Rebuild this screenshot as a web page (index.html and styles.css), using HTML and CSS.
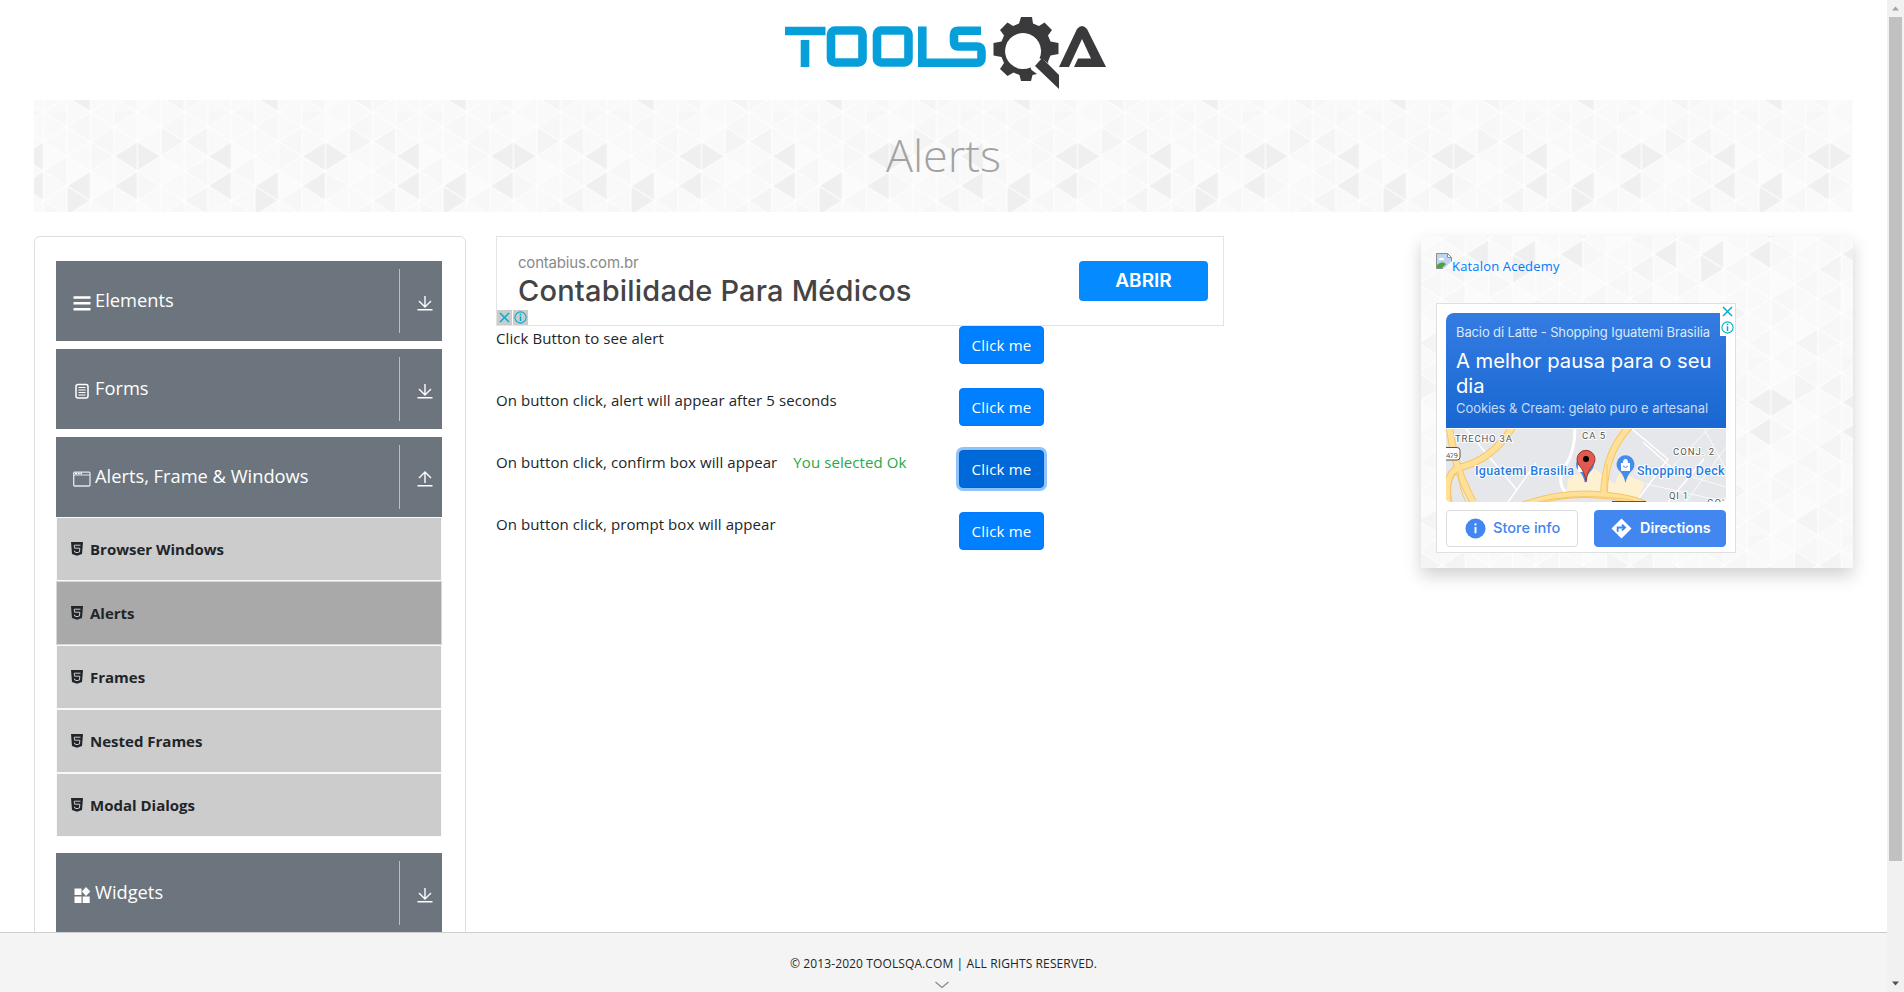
FILE: index.html
```html
<!DOCTYPE html>
<html lang="en">
<head>
<meta charset="utf-8">
<title>ToolsQA - Alerts</title>
<link rel="stylesheet" href="styles.css">
</head>
<body>
<svg class="defs" width="0" height="0" aria-hidden="true">
  <defs>
    <g id="tile">
      <rect width="188" height="177.6" fill="#f9f9f9"/>
      <g fill="#f7f7f7">
        <path d="M0 0L23.5-14.8V14.8zM23.5 14.8L47 0V29.6zM70.5-14.8L94 0 70.5 14.8zM117.5 14.8L141 0V29.6zM164.5-14.8V14.8L188 0zM0 59.2L23.5 44.4V74zM47 29.6L70.5 14.8V44.4zM47 29.6V59.2L70.5 44.4zM94 59.2V88.8L117.5 74zM47 88.8L70.5 74V103.6zM141 59.2L164.5 44.4V74zM0 88.8L23.5 103.6 0 118.4zM117.5 103.6L141 88.8V118.4zM141 118.4L164.5 103.6V133.2zM94 118.4L117.5 103.6V133.2zM23.5 133.2L47 118.4V148zM47 118.4V148L70.5 133.2zM94 118.4V148L117.5 133.2zM141 148L164.5 133.2V162.8zM141 148V177.6L164.5 162.8zM0 148L23.5 133.2V162.8zM70.5 162.8L94 148V177.6z"/>
      </g>
      <g fill="#fbfbfb">
        <path d="M94 0V29.6L117.5 14.8zM0 29.6V59.2L23.5 44.4zM23.5 44.4V74L47 59.2zM117.5 44.4V74L141 59.2zM47 59.2V88.8L70.5 74zM94 88.8V118.4L117.5 103.6zM164.5 103.6V133.2L188 118.4zM23.5 103.6V133.2L47 118.4zM94 148V177.6L117.5 162.8zM117.5 133.2V162.8L141 148z"/>
      </g>
      <g fill="#f4f4f4">
        <path d="M117.5 14.8V44.4L141 29.6zM141 29.6L164.5 14.8V44.4zM141 88.8L164.5 74V103.6zM47 118.4V148L70.5 133.2zM117.5 162.8L141 148V177.6z"/>
      </g>
      <g fill="#efefef">
        <path d="M70.5 44.4L94 29.6V59.2zM94 29.6V59.2L117.5 44.4zM164.5 44.4L188 29.6V59.2zM164.5 74L188 59.2V88.8zM23.5 74L47 59.2V88.8zM23.5 74V103.6L47 88.8zM70.5 74L94 59.2V88.8zM23.5 162.8L47 148V177.6z"/>
      </g>
      <path fill="none" stroke="#fefefe" stroke-width="1.2" d="M0 0V178M23.5 0V178M47 0V178M70.5 0V178M94 0V178M117.5 0V178M141 0V178M164.5 0V178M188 0V178M0 0L188 118.4M0 29.6L188 148M0 59.2L188 177.6M0 88.8L141 177.6M0 118.4L94 177.6M0 148L47 177.6M47 0L188 88.8M94 0L188 59.2M141 0L188 29.6M188 0L0 118.4M188 29.6L0 148M188 59.2L0 177.6M188 88.8L47 177.6M188 118.4L94 177.6M188 148L141 177.6M141 0L0 88.8M94 0L0 59.2M47 0L0 29.6"/>
    </g>
    <pattern id="bannerPattern" width="188" height="177.6" patternUnits="userSpaceOnUse" patternTransform="translate(9.4 11.9)"><use href="#tile"/></pattern>
    <pattern id="promoPattern" width="188" height="177.6" patternUnits="userSpaceOnUse" patternTransform="translate(67.8 121.9)"><use href="#tile"/></pattern>
    <symbol id="down" viewBox="0 0 16 16"><path d="M8 1v10M2 6l6 6 6-6M.5 14.8h15" fill="none" stroke="currentColor" stroke-width="1.4"/></symbol>
    <symbol id="up" viewBox="0 0 16 16"><path d="M8 12V1.5M2 7l6-6 6 6M.5 14.8h15" fill="none" stroke="currentColor" stroke-width="1.4"/></symbol>
    <symbol id="html5" viewBox="0 0 12 14"><path fill="currentColor" d="M0 0h12l-1 12L6 13.800 1 12z"/><path d="M9.500 3.200H3.200L3.500 6.200h5.300L8.500 9.900 6 10.700 3.600 9.900V8.600" fill="none" stroke="#ccc" stroke-width="1"/></symbol>
    <symbol id="close" viewBox="0 0 15 15"><path d="M3 3l9 9M12 3l-9 9" stroke="#00aecd" stroke-width="1.500" fill="none"/></symbol>
    <symbol id="info" viewBox="0 0 15 15"><circle cx="7.500" cy="7.500" r="5.600" fill="none" stroke="#00aecd" stroke-width="1.100"/><path d="M7.500 6.300v4.700M7.500 3.800v1.500" stroke="#00aecd" stroke-width="1.500"/></symbol>
  </defs>
</svg>
<div class="viewport">
  <div class="page">
    <header class="header">
      <svg class="logo" viewBox="0 0 350 100" role="img" aria-label="ToolsQA">
        <g fill="none" stroke="#069fda" stroke-width="8.600">
          <path d="M15 31H55.500M35 40V67"/>
          <rect x="61" y="30.500" width="31.500" height="32" rx="4"/>
          <rect x="107" y="30.500" width="31.500" height="32" rx="4"/>
          <path d="M152.300 26.500V62.700H207Q211.500 62.700 211.500 58V51Q211.500 46.500 207 46.500H188Q184 46.500 184 42V35Q184 30.700 188 30.700H211"/>
        </g>
        <g fill="#3a393b">
          <path fill-rule="evenodd" d="M251 17h11l1 6.500 6 2.500 5.500-3.500 7.500 7.500-4 5.500 2.500 6 8 1.500v11l-8 1.500-2.500 6 .5 2-6-4.500-3-.5a18 18 0 1 0-9 9l1 2.500 5.500 4-4.500 1-1.500 6h-10l-1.500-6-6-2.500-6 3.500-7.500-7 4-6-2.500-6-8-1.500V43l8-1.500 2.500-6-4-5.500 7.500-7.500 5.500 3.500 6-2.500z"/>
          <path d="M272 58L289 75V89L265 66z"/>
          <path fill-rule="evenodd" d="M289 67L307 29Q312 23 317 29L336 67H304L308 58.500H321L312 39 299 67z"/>
        </g>
      </svg>
    </header>
    <section class="banner">
      <svg class="texture"><rect width="100%" height="100%" fill="url(#bannerPattern)"/></svg>
      <h1 class="banner-title">Alerts</h1>
    </section>
    <div class="columns">
      <aside class="sidebar">
        <div class="group">
          <svg class="group-icon" viewBox="0 0 18 18"><path d="M.5 3.500h17M.5 9.300h17M.5 15.200h17" stroke="#fff" stroke-width="2.600"/></svg>
          <span class="group-name">Elements</span>
          <span class="toggle"><svg><use href="#down"/></svg></span>
        </div>
        <div class="group">
          <svg class="group-icon" viewBox="0 0 18 18"><rect x="3" y="2.500" width="12" height="13.500" rx="2" fill="none" stroke="#fff" stroke-width="1.500"/><path d="M5.500 5.500h7M5.500 8h7M5.500 10.500h7M5.500 13h7" stroke="#fff" stroke-width="1.100"/></svg>
          <span class="group-name">Forms</span>
          <span class="toggle"><svg><use href="#down"/></svg></span>
        </div>
        <div class="group open">
          <svg class="group-icon" viewBox="0 0 18 18"><rect x=".7" y="2.200" width="16.300" height="13.800" rx="1" fill="none" stroke="#e3e5e7" stroke-width="1.300"/><path d="M1 5h16" stroke="#e3e5e7"/><path d="M2 3.500h7" stroke="#fff" stroke-width="1.500" stroke-dasharray="2 .7"/></svg>
          <span class="group-name">Alerts, Frame &amp; Windows</span>
          <span class="toggle"><svg><use href="#up"/></svg></span>
        </div>
        <ul class="menu">
          <li><svg><use href="#html5"/></svg><span>Browser Windows</span></li>
          <li class="active"><svg><use href="#html5"/></svg><span>Alerts</span></li>
          <li><svg><use href="#html5"/></svg><span>Frames</span></li>
          <li><svg><use href="#html5"/></svg><span>Nested Frames</span></li>
          <li><svg><use href="#html5"/></svg><span>Modal Dialogs</span></li>
        </ul>
        <div class="group">
          <svg class="group-icon" viewBox="0 0 18 18"><path fill="#fff" d="M1.500 2.500h7v6.500h-7zM1.500 10.500h7v6.500h-7zM9.700 10.500h7v6.500h-7zM13 1l4.300 4.500L13 10 8.900 5.500z"/></svg>
          <span class="group-name">Widgets</span>
          <span class="toggle"><svg><use href="#down"/></svg></span>
        </div>
      </aside>
      <main class="main">
        <div class="ad-strip">
          <div class="ad-copy"><span class="ad-domain">contabius.com.br</span><span class="ad-title">Contabilidade Para Médicos</span></div>
          <span class="ad-cta">ABRIR</span>
          <div class="ad-marks"><svg><use href="#close"/></svg><svg><use href="#info"/></svg></div>
        </div>
        <div class="row"><div class="label">Click Button to see alert</div><button class="btn">Click me</button></div>
        <div class="row"><div class="label">On button click, alert will appear after 5 seconds</div><button class="btn">Click me</button></div>
        <div class="row"><div class="label"><span>On button click, confirm box will appear</span><span class="result">You selected Ok</span></div><button class="btn focused">Click me</button></div>
        <div class="row"><div class="label">On button click, prompt box will appear</div><button class="btn">Click me</button></div>
      </main>
      <aside class="promo">
        <svg class="texture"><rect width="100%" height="100%" fill="url(#promoPattern)"/></svg>
        <a class="broken"><svg viewBox="0 0 16 16"><path d="M.5.500h11l4 4v11H.5z" fill="#fff"/><path d="M1 1h10v4h4v4L9 15H1z" fill="#bfd3f2"/><path d="M3 6q1-2 2.500-1Q8 4 8 7H3z" fill="#fff"/><path d="M1 15v-3q5-5 9-1l-4 4z" fill="#4aa63c"/><path d="M.5 15.500V.500h11l4 4V9M11.500.500v4h4M.500 15.500H7" fill="none" stroke="#8d8d8d"/><path d="M16 8l-8 8h8z" fill="#fff"/></svg><span>Katalon Acedemy</span></a>
        <div class="card">
          <div class="card-top">
            <div class="card-place">Bacio di Latte - Shopping Iguatemi Brasilia</div>
            <div class="card-title">A melhor pausa para o seu<br>dia</div>
            <div class="card-sub">Cookies &amp; Cream: gelato puro e artesanal</div>
          </div>
          <svg class="map" viewBox="0 0 280 73">
            <rect width="280" height="73" fill="#e6e7eb"/>
            <g fill="none" stroke="#fff"><path d="M186 0L222 30 190 73M197 13L227 40M222 73L258 30M62 73L90 34M20 0L70 60" stroke-width="1.500"/><path d="M262 0L215 50M280 40L258 0M240 73L280 18M200 55L280 73M226 42L280 58" stroke-width=".8"/><path d="M129 0Q129 22 119 38T122 66" stroke-width="3"/></g>
            <path d="M122 50l24-12 25 19-3 12h-48zM174 43l25 11-8 17h-30z" fill="#fdf1d2"/>
            <g fill="none" stroke="#f6c666" stroke-width="7.500"><path d="M67-3Q47 31 12 39M3-3L8 25Q14 49 27 73M2 73Q-2 50 10 40M75 77Q115 62 155 66T200 77M184-3Q159 23 158 64"/></g>
            <g fill="none" stroke="#ffe098" stroke-width="5.500"><path d="M67-3Q47 31 12 39M3-3L8 25Q14 49 27 73M2 73Q-2 50 10 40M75 77Q115 62 155 66T200 77M184-3Q159 23 158 64"/></g>
            <path d="M92 73Q120 66 155 68T188 73M161 35V62M9 44Q2 55 6 73M12 42Q13 60 20 73" fill="none" stroke="#f6c666"/>
            <rect x="-8" y="18.500" width="22" height="12.500" rx="3" fill="#fff" stroke="#555"/>
            <g class="map-text"><text x="0" y="28.500" textLength="12" font-size="8">479</text><text x="9" y="13" textLength="57">TRECHO 3A</text><text x="136" y="10" textLength="23">CA 5</text><text x="227" y="26" textLength="41">CONJ. 2</text><text x="223" y="70" textLength="19">QI 1</text><text x="261" y="77" textLength="17">CO'</text></g>
            <path d="M139 54q-2-9-7-13a9 9 0 1 1 14 0q-5 4-7 13zM179.500 54q-2-9-7-13a9 9 0 1 1 14 0q-5 4-7 13z" fill="#468de9"/>
            <path d="M175 34h9v8h-9zM177 34q0-4 2.500-4t2.500 4M132 36h5v7h-5z" fill="#fff"/><path d="M177 37q2.500 3 5 0" stroke="#468de9" fill="none"/>
            <path d="M140 53q-1-10-7-17a9 9 0 1 1 14 0q-6 6-7 17z" fill="#e05a50" stroke="#9e352f"/><circle cx="140" cy="30" r="3" fill="#000"/>
            <g class="map-blue"><text x="29" y="46" textLength="99">Iguatemi Brasilia</text><text x="191" y="46" textLength="87.500">Shopping Deck</text></g>
            <path d="M166 72.500h34" stroke="#555"/>
          </svg>
          <div class="card-actions">
            <span class="action info"><svg viewBox="0 0 22 22"><circle cx="11" cy="11" r="10.500" fill="#4286ef"/><path d="M11 9.500v6.500M11 5.500v2.300" stroke="#fff" stroke-width="2"/></svg><span>Store info</span></span>
            <span class="action go"><svg viewBox="0 0 22 22"><path d="M11 .5L21.500 11 11 21.500.5 11z" fill="#fff"/><path d="M7 14.500V10h7M11.500 7l3.200 3-3.200 3" fill="none" stroke="#4286ef" stroke-width="2"/></svg><span>Directions</span></span>
          </div>
          <div class="card-marks"><svg><use href="#close"/></svg><svg><use href="#info"/></svg></div>
        </div>
      </aside>
    </div>
    <footer class="footer"><span>© 2013-2020 TOOLSQA.COM | ALL RIGHTS RESERVED.</span>
      <svg class="chevron" viewBox="0 0 14 8"><path d="M.500 1l6.500 5.500L13.500 1" fill="none" stroke="#888" stroke-width="1.200"/></svg></footer>
  </div>
  <div class="scrollbar"><svg viewBox="0 0 17 17"><path d="M5 10.500l3.500-4 3.500 4z" fill="#a3a3a3"/></svg><div class="thumb"></div><svg viewBox="0 0 17 17"><path d="M5 6.500l3.500 4 3.500-4z" fill="#505050"/></svg></div>
</div>
</body>
</html>
```
FILE: styles.css
```css
* { box-sizing: border-box; }
body { margin: 0; overflow: hidden; background: #fff; color: #212529; font: 16px/24px "Open Sans", "Noto Sans", sans-serif; }
svg { display: block; flex: none; }
.defs { position: absolute; }
.viewport { display: flex; height: 992px; overflow: hidden; }
.page { position: relative; flex: 1; height: 992px; overflow: hidden; padding: 0 34px; }
.header { height: 100px; display: flex; justify-content: center; padding-left: 3px; }
.logo { width: 350px; height: 100px; }
.banner { position: relative; height: 112px; width: 1819px; display: flex; align-items: center; justify-content: center; }
.texture { position: absolute; inset: 0; width: 100%; height: 100%; }
.banner-title { position: relative; margin: 0 0 3px; font-size: 45px; line-height: 56px; font-weight: 300; color: #a3a3a3; letter-spacing: -.1px; }
.columns { display: flex; align-items: flex-start; width: 1819px; margin-top: 24px; }
.sidebar { width: 432px; height: 900px; padding: 24px 23px 0 21px; border: 1px solid #dfdfdf; border-radius: 6px; }
.group { display: flex; align-items: center; width: 386px; height: 80px; margin-bottom: 8px; padding-left: 17px; background: #6c757d; color: #fff; font-size: 18.300px; }
.group.open { margin-bottom: 0; }
.group-icon { width: 18px; height: 18px; margin-top: 3px; }
.group-name { margin-left: 4px; padding-bottom: 2px; flex: 1; }
.toggle { display: flex; align-items: center; justify-content: center; width: 43px; height: 64px; padding: 4px 0 0 7px; border-left: 1px solid #babec2; }
.toggle svg { width: 16px; height: 16px; }
.menu { list-style: none; margin: 0 0 16px; padding: 0; width: 386px; }
.menu li { display: flex; align-items: center; height: 64px; padding-left: 14px; border: 1px solid #f8f9fa; background: #ccc; font-weight: 700; font-size: 15px; }
.menu li.active { background: #a9a9a9; border-color: #d3d8df; }
.menu svg { width: 12px; height: 14px; margin-right: 7px; }
.main { width: 728px; margin-left: 30px; }
.ad-strip { position: relative; display: flex; justify-content: space-between; height: 90px; padding: 24px 15px 0 21px; border: 1px solid #e3e3e3; font-family: Inter, sans-serif; background: #fff; }
.ad-copy { display: flex; flex-direction: column; margin-top: -8px; }
.ad-domain { font-size: 15px; line-height: 19px; color: #8a8a8a; letter-spacing: -.2px; }
.ad-title { font-size: 29px; line-height: 38px; font-weight: 500; color: #444; letter-spacing: .2px; }
.ad-cta { width: 129px; height: 40px; border-radius: 4px; background: #058bff; color: #fff; font-weight: 600; font-size: 19px; line-height: 39px; text-align: center; }
.ad-marks { position: absolute; left: 0; bottom: 0; display: flex; gap: 1px; }
.ad-marks svg { width: 15px; height: 15px; background: #ccc; }
.row { display: flex; align-items: flex-start; height: 62px; }
.label { width: 463px; white-space: nowrap; font-size: 15px; letter-spacing: .08px; }
.result { margin-left: 16px; color: #28a745; }
.btn { width: 85px; height: 38px; padding: 0; border: 1px solid #007bff; border-radius: 4px; background: #007fff; color: #fff; font: 15px/24px "Open Sans", sans-serif; letter-spacing: .2px; }
.btn.focused { background: #0069d9; border-color: #0062cc; box-shadow: 0 0 0 3px #8ec3fb; }
.promo { position: relative; width: 432px; height: 332px; margin-left: auto; padding: 17px 15px 0; box-shadow: 0 8px 16px rgba(0,0,0,.18); }
.broken { position: relative; display: flex; height: 50px; color: #007bff; font-size: 13px; line-height: 27px; letter-spacing: .17px; }
.broken svg { width: 16px; height: 16px; }
.card { position: relative; width: 300px; height: 250px; padding: 9px; border: 1px solid #e0e0e0; background: #fff; font-family: Inter, sans-serif; }
.card-top { height: 115px; padding: 10px 0 0 10px; border-radius: 8px 0 0; background: linear-gradient(#347ce2, #1967d2); color: #fff; white-space: nowrap; }
.card-place { font-size: 13px; line-height: 19px; color: #dbe8fa; letter-spacing: -.12px; }
.card-title { margin-top: 6px; font-size: 20.200px; line-height: 25px; }
.card-sub { font-size: 13px; line-height: 21px; color: #c5dbf7; letter-spacing: -.06px; }
.map { width: 280px; height: 73px; margin-top: 1px; border-radius: 0 0 5px 5px; }
.map-text { font: 9.500px Roboto, sans-serif; fill: #555; stroke: #fff; stroke-width: 2px; paint-order: stroke; }
.map-blue { font: 500 12.500px Roboto, sans-serif; fill: #287bde; stroke: #fff; stroke-width: 2px; paint-order: stroke; }
.card-actions { display: flex; justify-content: space-between; margin-top: 8px; }
.action { display: flex; align-items: center; gap: 7px; width: 132px; height: 37px; padding-left: 18px; border: 1px solid #dadce0; border-radius: 4px; color: #4286ef; font-size: 14.600px; font-weight: 500; white-space: nowrap; }
.action svg { width: 21px; height: 21px; }
.action span { padding-bottom: 2px; }
.action.go { padding-left: 16px; border-color: #4286ef; background: #4286ef; color: #fff; font-size: 14.400px; font-weight: 600; gap: 8px; }
.card-marks { position: absolute; top: 0; right: 0; width: 15px; background: #fff; }
.card-marks svg { width: 15px; height: 15px; margin-bottom: 1px; }
.footer { position: absolute; left: 0; right: 0; bottom: 0; height: 60px; padding-top: 19px; border-top: 1px solid #ccc; background: #f4f4f4; text-align: center; font-size: 12px; letter-spacing: .11px; }
.chevron { position: absolute; left: 935px; bottom: 3px; width: 14px; height: 8px; }
.scrollbar { width: 17px; display: flex; flex-direction: column; align-items: center; background: #f1f1f1; }
.scrollbar svg { width: 17px; height: 17px; }
.thumb { width: 13px; height: 844px; margin-bottom: auto; background: #c1c1c1; }
```
